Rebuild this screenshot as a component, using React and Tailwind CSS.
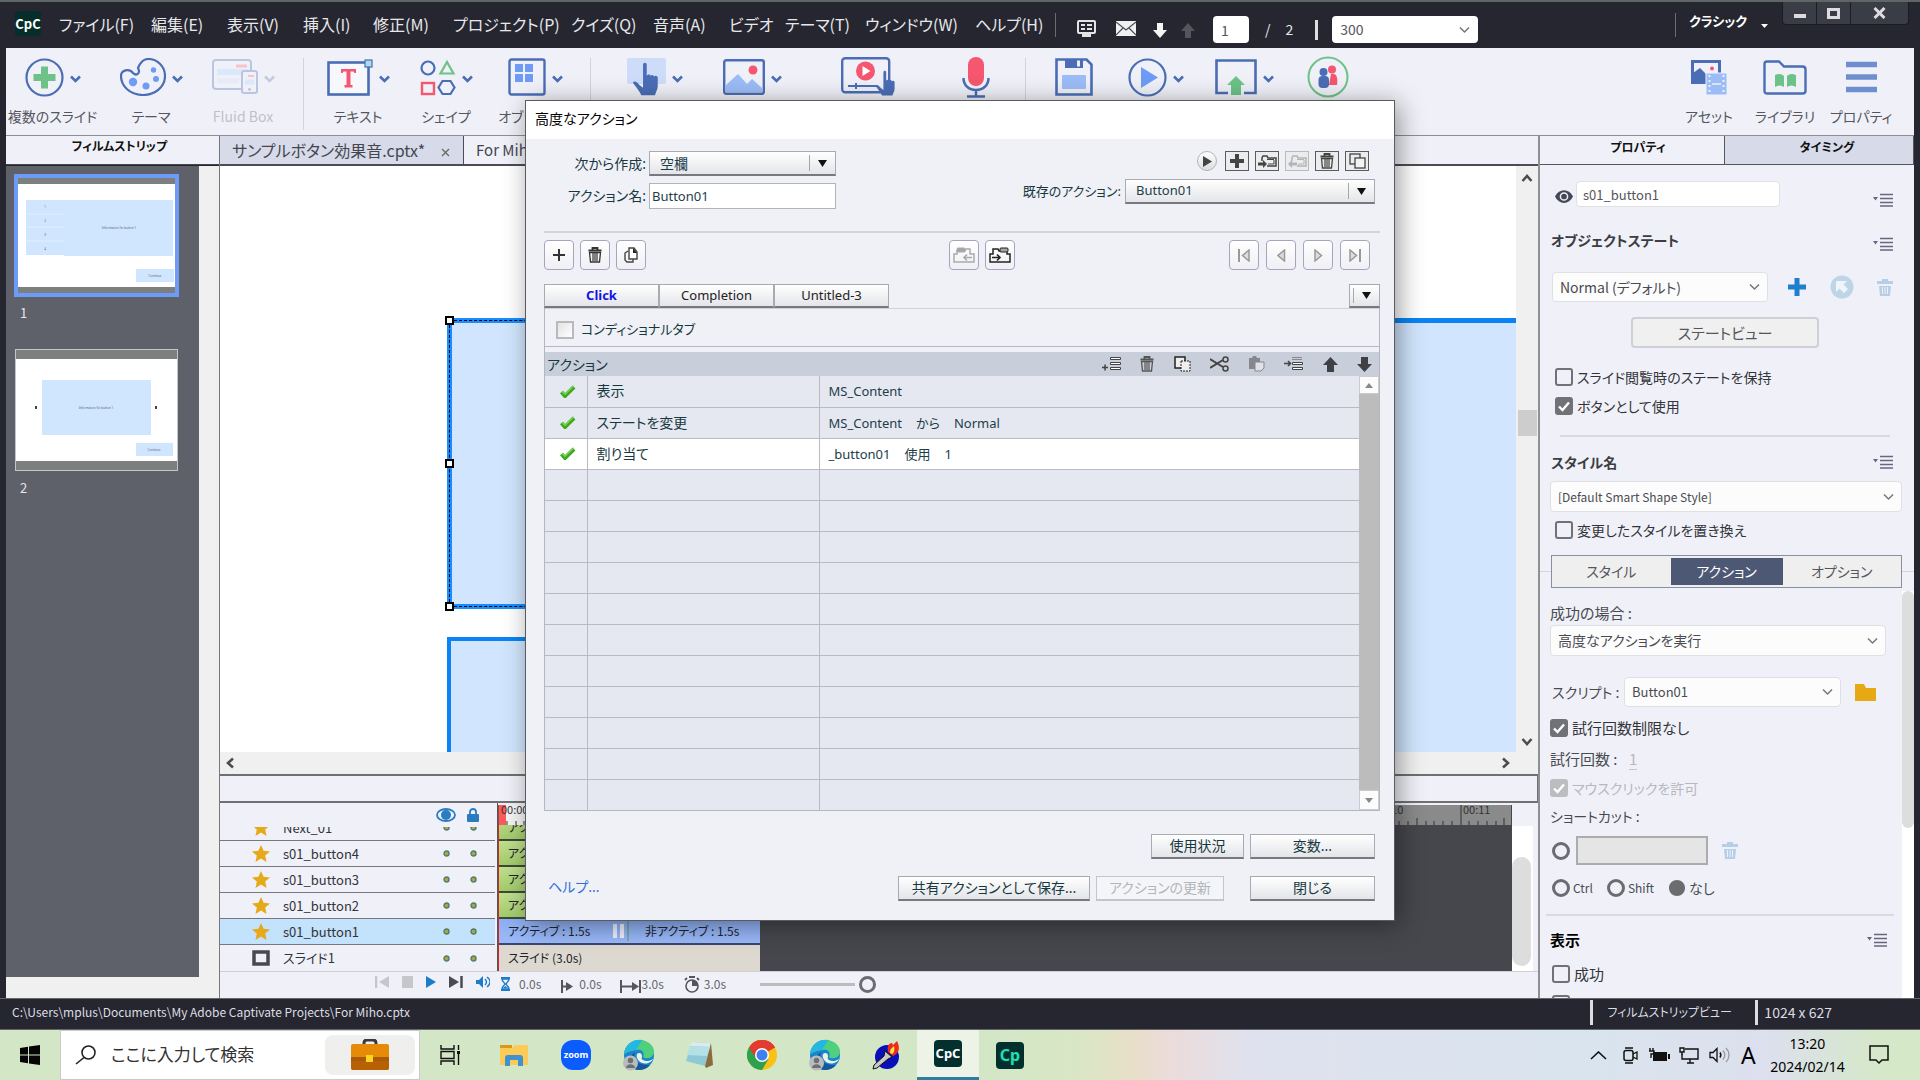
import React from "react";

const BLUE = "#4a6db5";

function Svg({ w, h, vb, children, className = "" }) {
  return (
    <svg width={w} height={h} viewBox={vb || `0 0 ${w} ${h}`} fill="none" className={`shrink-0 ${className}`} aria-hidden="true">
      {children}
    </svg>
  );
}

const MENUS = [
  ["ファイル(F)", "w-[92px]"], ["編集(E)", "w-[76px]"], ["表示(V)", "w-[76px]"], ["挿入(I)", "w-[70px]"],
  ["修正(M)", "w-[80px]"], ["プロジェクト(P)", "w-[118px]"], ["クイズ(Q)", "w-[82px]"], ["音声(A)", "w-[76px]"],
  ["ビデオ", "w-[56px]"], ["テーマ(T)", "w-[80px]"], ["ウィンドウ(W)", "w-[110px]"], ["ヘルプ(H)", "w-[76px]"],
];

/* ---------- shared form controls ---------- */

function Chevron() {
  return (
    <Svg w={11} h={7} className="pointer-events-none absolute top-1/2 right-2 -translate-y-1/2">
      <path d="M1 1l4.500 4.500L10 1" stroke="#777" strokeWidth="1.500" />
    </Svg>
  );
}

function PanelSelect({ label, value, className = "", text = "text-[14px]" }) {
  return (
    <span className={`relative inline-flex ${className}`}>
      <select aria-label={label} className={`h-full w-full appearance-none rounded-sm border border-[#dfe0e4] bg-[#fcfcfc] pr-6 pl-[7px] text-[#4a4b50] ${text}`}>
        <option>{value}</option>
      </select>
      <Chevron />
    </span>
  );
}

function Check({ label, name, checked = false, disabled = false, text = "text-[14px]", className = "" }) {
  return (
    <label className={`flex shrink-0 items-center gap-1 leading-[18px] ${text} ${disabled ? "text-[#b7b8bd]" : "text-[#333439]"} ${className}`}>
      <span className="relative flex size-[18px] shrink-0">
        <input
          type="checkbox"
          aria-label={name}
          defaultChecked={checked}
          disabled={disabled}
          className="peer size-[18px] appearance-none rounded-[3px] border-2 border-[#717277] checked:bg-[#717277] disabled:border-[#bcbdc0] disabled:bg-[#bcbdc0]"
        />
        <Svg w={18} h={18} className="pointer-events-none absolute inset-0 hidden peer-checked:block">
          <path d="M4 9.500l3.500 3.500L14 5.500" stroke="#fff" strokeWidth="2.400" />
        </Svg>
      </span>
      {label}
    </label>
  );
}

function Radio({ label, checked = false, text = "text-[12px]" }) {
  return (
    <label className={`flex items-center gap-[3px] text-[#4a4b50] ${text}`}>
      <input
        type="radio"
        name="shortcut"
        defaultChecked={checked}
        aria-label={label || "ショートカットキー"}
        className="size-[18px] appearance-none rounded-full border-[3px] border-[#6b6c70] checked:scale-90 checked:bg-[#6b6c70]"
      />
      {label}
    </label>
  );
}

function MenuLines({ className = "" }) {
  return (
    <button aria-label="パネルメニュー" className={className}>
      <Svg w={20} h={14}>
        <path d="M0 4h5L2.500 7.500z" fill="#6a6480" />
        <path d="M7 1.500h13M7 5.500h13M7 9.500h13M7 13h13" stroke="#6a6480" strokeWidth="1.400" />
      </Svg>
    </button>
  );
}

function PaleTrash() {
  return (
    <Svg w={16} h={17}>
      <path d="M5 0h6v2h5v3H0V2h5z" fill="#b5d0e6" />
      <path d="M2 7h12l-1 10H3z" fill="#b5d0e6" />
      <path d="M5.500 8v7M8 8v7M10.500 8v7" stroke="#f0f1f8" />
    </Svg>
  );
}

/* ---------- title bar ---------- */

function TitleBar() {
  return (
    <header className="flex h-12 shrink-0 border-t-2 border-[#5f6668] bg-[#25262f] pl-[15px] text-[#e8e8ec]">
      <div className="mt-[9px] flex h-[25px] w-[26px] items-center justify-center rounded bg-[#052e2b] text-[13px] font-bold text-white">CpC</div>
      <nav className="ml-[18px] flex h-[44px] w-[982px] items-center">
        {MENUS.map(([m, w]) => (
          <button key={m} className={`shrink-0 text-left text-[16px] whitespace-nowrap ${w}`}>{m}</button>
        ))}
      </nav>
      <div className="mt-[11px] ml-[14px] h-6 w-px bg-[#6b6c72]" />
      <div className="ml-[21px] flex h-[52px] items-center">
        <button aria-label="プレビュー">
          <Svg w={19} h={17}>
            <rect x="1" y="1" width="17" height="12" rx="1" stroke="#e4e4e6" strokeWidth="2" />
            <path d="M4 5h4M10 5h5M4 9h4M10 9h5" stroke="#e4e4e6" strokeWidth="2" />
            <path d="M5 14h9v3H5z" fill="#e4e4e6" />
          </Svg>
        </button>
        <button aria-label="メール" className="ml-5">
          <Svg w={20} h={15}>
            <rect width="20" height="15" fill="#f0f0f2" />
            <path d="M0 1l10 8 10-8M0 14l7-7M20 14l-7-7" stroke="#4b4c52" strokeWidth="1.200" />
          </Svg>
        </button>
        <button aria-label="次のスライド" className="ml-[17px] mt-1">
          <Svg w={14} h={15}><path d="M4 0h6v7h4l-7 8-7-8h4z" fill="#f4f4f5" /></Svg>
        </button>
        <button aria-label="前のスライド" className="ml-[14px] mt-1">
          <Svg w={14} h={15}><path d="M4 15h6V8h4L7 0 0 8h4z" fill="#55565d" /></Svg>
        </button>
      </div>
      <div className="mt-[14px] ml-[18px] flex h-[27px] items-center text-[14px]">
        <input aria-label="スライド番号" defaultValue="1" className="h-[27px] w-[36px] rounded-sm bg-white pl-2 text-[14px] text-[#55565b]" />
        <span className="ml-4">/</span>
        <span className="ml-[15px]">2</span>
        <span className="ml-[22px] h-5 w-[3px] bg-[#dedee0]" />
        <span className="relative ml-[14px] inline-flex">
          <select aria-label="ズーム" className="h-[27px] w-[146px] appearance-none rounded-sm bg-white pl-2 text-[14px] text-[#55565b]">
            <option>300</option>
          </select>
          <Chevron />
        </span>
      </div>
      <div className="mt-[11px] ml-auto h-6 w-px bg-[#6b6c72]" />
      <button className="ml-[13px] flex h-[38px] items-center gap-[14px] text-[13px] font-bold text-white">
        クラシック
        <Svg w={7} h={4} className="mt-[10px]"><path d="M0 0h7L3.500 4z" fill="#fff" /></Svg>
      </button>
      <div className="mr-[11px] ml-[14px] flex h-[23px] rounded-b-sm border border-t-0 border-[#1a1b21] bg-[#3a3c46]">
        <button aria-label="最小化" className="flex w-[34px] items-center justify-center border-r border-[#1c1d23]">
          <Svg w={13} h={12}><path d="M1 9h12" stroke="#dcdce0" strokeWidth="4" /></Svg>
        </button>
        <button aria-label="最大化" className="flex w-[34px] items-center justify-center border-r border-[#1c1d23]">
          <Svg w={13} h={11}><rect x="1.500" y="1.500" width="10" height="8" stroke="#dcdce0" strokeWidth="3" /></Svg>
        </button>
        <button aria-label="ウィンドウを閉じる" className="flex w-[57px] items-center justify-center">
          <Svg w={13} h={12}><path d="M1.500 1l10 10M11.500 1l-10 10" stroke="#dcdce0" strokeWidth="3" /></Svg>
        </button>
      </div>
    </header>
  );
}

/* ---------- main toolbar ---------- */

const HAND = "M12 2c0-3 4-3 4 0v12c1-2 4-2 4 0 1-2 4-1 4 1 1-2 4-1 4 1v9c0 4-2 6-3 10H10c-1-4-8-11-9-14 2-2 5 0 7 3l4 3z";

const ICONS = {
  slide: (
    <Svg w={39} h={39}>
      <circle cx="19.500" cy="19.500" r="18" stroke={BLUE} strokeWidth="2.200" />
      <path d="M16 8.500h7v7.500h7.500v7H23v7.500h-7V23H8.500v-7H16z" fill="#6cc287" />
    </Svg>
  ),
  theme: (
    <Svg w={46} h={38}>
      <path d="M18 10C21 3 24 1 28 1c9 0 17 7 17 17 0 11-10 19-22 19C10 37 1 28 1 18c0-6 8-8 12-3 3 3 8 1 5-5z" stroke={BLUE} strokeWidth="2.200" />
      <circle cx="13" cy="24" r="4.200" fill="#6d9bf5" />
      <circle cx="26" cy="28" r="3.500" fill="#6d9bf5" />
      <circle cx="36" cy="21" r="3" fill="#6d9bf5" />
      <circle cx="33.500" cy="12" r="2.700" fill="#6d9bf5" />
    </Svg>
  ),
  fluid: (
    <Svg w={46} h={36}>
      <rect x="1" y="1" width="38" height="29" rx="3" stroke="#bac6df" strokeWidth="2" />
      <path d="M24 7h11" stroke="#f6c3cd" strokeWidth="3" />
      <path d="M5 13h32" stroke="#dbe7fb" strokeWidth="6" />
      <path d="M5 22h22" stroke="#e6ebf5" strokeWidth="5" />
      <rect x="30" y="12" width="15" height="22" rx="2" fill="#f0f1f8" stroke="#bac6df" strokeWidth="2" />
      <path d="M36 17h6" stroke="#f6c3cd" strokeWidth="2" />
      <path d="M33 23h9" stroke="#dbe7fb" strokeWidth="5" />
      <circle cx="37.500" cy="30.500" r="1.400" fill="#bac6df" />
    </Svg>
  ),
  text: (
    <Svg w={46} h={37}>
      <rect x="1.500" y="3.500" width="40" height="32" fill="#f7f8fb" stroke={BLUE} strokeWidth="2.600" />
      <rect x="38" y="1" width="7" height="7" fill="#a9dcec" stroke={BLUE} strokeWidth="1.200" />
      <path d="M14 10h15v4h-1.500l-1-1.500h-3v13.500h2v2.500h-8V26h2V12.500h-3l-1 1.500H14z" fill="#f4576f" />
    </Svg>
  ),
  shape: (
    <Svg w={36} h={37}>
      <circle cx="8" cy="9" r="6.500" stroke={BLUE} strokeWidth="2.200" />
      <path d="M27 3l6.500 11.500h-13z" stroke="#6cc287" strokeWidth="2.200" />
      <rect x="2" y="24" width="12" height="11" stroke="#f4576f" strokeWidth="2.400" />
      <path d="M22.500 22h8l4 6.500-4 6.500h-8l-4-6.500z" stroke={BLUE} strokeWidth="2.200" />
    </Svg>
  ),
  object: (
    <Svg w={38} h={38}>
      <rect x="1.500" y="1.500" width="35" height="35" rx="2" stroke={BLUE} strokeWidth="2.400" />
      <path d="M7 6h8v8H7zM17 6h8v8h-8zM7 16h8v8H7zM17 16h8v8h-8z" fill="#6d9bf5" />
    </Svg>
  ),
  hand: (
    <Svg w={39} h={38}>
      <rect width="39" height="26" rx="2" fill="#cddcf9" />
      <g transform="translate(5 5) scale(.92)"><path d={HAND} fill={BLUE} /></g>
    </Svg>
  ),
  image: (
    <Svg w={42} h={36}>
      <rect x="1.200" y="1.200" width="39.600" height="33.600" rx="2" stroke={BLUE} strokeWidth="2.400" />
      <path d="M3 33v-7l12-11 9 10 5-5 10 9v4z" fill="#9cbcf7" />
      <circle cx="30" cy="11" r="4.500" fill="#f4576f" />
    </Svg>
  ),
  video: (
    <Svg w={54} h={40}>
      <rect x="1.200" y="1.200" width="47" height="34" rx="3" stroke={BLUE} strokeWidth="2.400" />
      <circle cx="24.500" cy="14" r="9.500" fill="#f4576f" />
      <path d="M21.500 9l8 5-8 5z" fill="#fff" />
      <path d="M7 29h30M15 26v6" stroke={BLUE} strokeWidth="2" />
      <g transform="translate(34 14) scale(.7)"><path d={HAND} fill={BLUE} /></g>
    </Svg>
  ),
  mic: (
    <Svg w={28} h={41}>
      <rect x="6" y="0" width="16" height="29" rx="8" fill="#f4576f" />
      <path d="M1.500 21c0 7 5 12 12.500 12s12.500-5 12.500-12M14 33v6M5 39.500h18" stroke={BLUE} strokeWidth="2.500" />
    </Svg>
  ),
  save: (
    <Svg w={38} h={38}>
      <path d="M1.500 1.500h30l5 5v30h-35z" stroke={BLUE} strokeWidth="2.600" />
      <path d="M10 1h18v9H10z" fill={BLUE} />
      <path d="M22 2.500h3v6h-3z" fill="#f0f1f8" />
      <rect x="7" y="17" width="24" height="14" rx="1" fill="#9cbcf7" />
    </Svg>
  ),
  play: (
    <Svg w={39} h={39}>
      <circle cx="19.500" cy="19.500" r="18" stroke={BLUE} strokeWidth="2.200" />
      <path d="M13 9l17 10.500L13 30z" fill="#6d9bf5" />
    </Svg>
  ),
  publish: (
    <Svg w={42} h={36}>
      <path d="M13 34H1.500V1.500h39V34H29" stroke={BLUE} strokeWidth="2.600" />
      <path d="M21 17l9 9h-4v10H16V26h-4z" fill="#6cc287" />
    </Svg>
  ),
  people: (
    <Svg w={42} h={42}>
      <circle cx="21" cy="21" r="19.500" stroke="#6cc287" strokeWidth="2" />
      <circle cx="25" cy="13.500" r="4" fill="#f4576f" />
      <path d="M24 18c6-1 7 4 6 11h-8z" fill="#f4576f" />
      <circle cx="16.500" cy="16" r="4" fill={BLUE} />
      <rect x="11.500" y="20" width="10.500" height="12" rx="4" fill={BLUE} />
    </Svg>
  ),
  asset: (
    <Svg w={36} h={35}>
      <rect x="1.500" y="1.500" width="27" height="21" stroke={BLUE} strokeWidth="3" />
      <path d="M2 22V13l7-5 6 6v8z" fill={BLUE} />
      <circle cx="21" cy="8.500" r="2" fill="#f4576f" />
      <rect x="15" y="13" width="21" height="22" fill="#9cbcf7" stroke="#f0f1f8" />
      <path d="M18.500 15v18M32.500 15v18" stroke="#f0f1f8" strokeWidth="2" strokeDasharray="2 3" />
      <path d="M21 24h9" stroke="#f0f1f8" strokeWidth="1.500" />
    </Svg>
  ),
  library: (
    <Svg w={44} h={35}>
      <path d="M4 1.500h12l5 5h18.500c2 0 3 1 3 3V31c0 2-1 2.500-3 2.500h-35c-2 0-3-.5-3-2.500V4c0-1.500 1-2.500 2.500-2.500z" stroke={BLUE} strokeWidth="2.400" />
      <path d="M12 15c4-2 7-1 9 1v11c-3-2-6-2-9 0zM33 15c-4-2-7-1-9 1v11c3-2 6-2 9 0z" fill="#6cc287" />
    </Svg>
  ),
  property: (
    <Svg w={31} h={32}><path d="M0 3.500h31M0 16h31M0 28.500h31" stroke="#6d8fce" strokeWidth="5.500" /></Svg>
  ),
};

function Tool({ icon, label, caret = true, dim = false, w }) {
  return (
    <button className={`flex shrink-0 flex-col items-center ${w}`}>
      <span className="flex h-[42px] items-center gap-[6px]">
        {ICONS[icon]}
        {caret && (
          <Svg w={11} h={8} className="mt-1"><path d="M1 1.500l4.500 4.500L10 1.500" stroke={dim ? "#c2cbe0" : BLUE} strokeWidth="2.600" /></Svg>
        )}
      </span>
      {label && <span className={`mt-[7px] text-[14px] leading-[22px] whitespace-nowrap ${dim ? "text-[#bfc0c8]" : "text-[#55565d]"}`}>{label}</span>}
    </button>
  );
}

const Rule = () => <div className="mt-[2px] h-[72px] w-px shrink-0 bg-[#d4d5da]" />;

function Toolbar() {
  return (
    <div className="flex h-[88px] shrink-0 items-start overflow-hidden border-b border-[#8d8e93] bg-[#f0f1f8] pt-2">
      <Tool icon="slide" label="複数のスライド" w="w-[93px]" />
      <Tool icon="theme" label="テーマ" w="w-[104px]" />
      <Tool icon="fluid" label="Fluid Box" dim w="w-[80px]" />
      <div className="w-5" />
      <Rule />
      <Tool icon="text" label="テキスト" w="w-[108px]" />
      <Tool icon="shape" label="シェイプ" w="w-[68px]" />
      <Tool icon="object" label="オブジェクト" w="w-[110px]" />
      <Rule />
      <Tool icon="hand" w="w-[128px]" />
      <Tool icon="image" w="w-[66px]" />
      <Tool icon="video" caret={false} w="w-[166px]" />
      <Tool icon="mic" caret={false} w="w-[50px]" />
      <div className="w-6" />
      <Rule />
      <Tool icon="save" caret={false} w="w-[96px]" />
      <Tool icon="play" w="w-[68px]" />
      <Tool icon="publish" w="w-[108px]" />
      <Tool icon="people" caret={false} w="w-[60px]" />
      <div className="mr-[15px] ml-auto flex">
        <Tool icon="asset" label="アセット" caret={false} w="w-[76px]" />
        <Tool icon="library" label="ライブラリ" caret={false} w="w-[76px]" />
        <Tool icon="property" label="プロパティ" caret={false} w="w-[76px]" />
      </div>
    </div>
  );
}

/* ---------- filmstrip ---------- */

function Filmstrip() {
  return (
    <aside className="flex w-[214px] shrink-0 flex-col border-r border-[#77787c]">
      <h2 className="h-[29px] border-b border-[#45464a] bg-[#f0f1f8] pl-[14px] text-center text-[12px] leading-[20px] font-bold text-[#111]">フィルムストリップ</h2>
      <div className="flex min-h-0 flex-1 pt-px">
        <div className="flex-1 bg-[#5e616a] pt-2 pl-2 text-[13px] leading-4 text-[#e6e6e8]">
          <button className="block border-4 border-[#6d9bf8]">
            <Svg w={157} h={115}>
              <rect width="157" height="115" fill="#fff" />
              <path d="M0 0h157v6H0zM0 109h157v6H0z" fill="#7d7f7e" />
              <path d="M8 22h38v55H8zM46 22h109v56H46zM118 91h38v13h-38z" fill="#d0e5fe" />
              <path d="M8 36h38M8 49h38M8 63h38" stroke="#e2effe" strokeWidth="1" />
              <g fill="#5a6672" fontSize="3" textAnchor="middle" fontFamily="Noto Sans">
                <text x="27" y="30">1</text><text x="27" y="44">2</text><text x="27" y="58">3</text><text x="27" y="72">4</text>
                <text x="101" y="51">Information for button 1</text>
                <text x="137" y="99">Continue</text>
              </g>
            </Svg>
          </button>
          <p className="mt-2 ml-[6px]">1</p>
          <button className="mt-7 ml-px block border border-[#c4c5c8]">
            <Svg w={161} h={120}>
              <rect width="161" height="120" fill="#fff" />
              <path d="M0 0h161v9H0zM0 111h161v9H0z" fill="#7d7f7e" />
              <path d="M26 30h109v55H26zM120 93h37v13h-37z" fill="#d0e5fe" />
              <path d="M19 56h2v3h-2zM139 56h2v3h-2z" fill="#444" />
              <g fill="#5a6672" fontSize="3" textAnchor="middle" fontFamily="Noto Sans">
                <text x="80" y="59">Information for button 1</text>
                <text x="138" y="101">Continue</text>
              </g>
            </Svg>
          </button>
          <p className="mt-[9px] ml-[6px]">2</p>
        </div>
        <div className="w-5 bg-[#f0f0f0]" />
      </div>
      <div className="h-[21px] bg-[#f0f0f0]" />
    </aside>
  );
}

/* ---------- stage ---------- */

function Arrow({ d, label, className = "" }) {
  return (
    <button aria-label={label} className={className}>
      <Svg w={12} h={12}><path d={d} stroke="#4d4d50" strokeWidth="2.600" /></Svg>
    </button>
  );
}

function Stage() {
  return (
    <>
      <div className="flex h-[30px] shrink-0 border-b-2 border-[#4c4d52] bg-[#f0f1f8] text-[#444550]">
        <div className="flex w-[244px] items-center justify-between border-r border-[#4c4d52] bg-[#d7dae8] pr-[13px] pl-3">
          <button className="text-[16px] leading-6 whitespace-nowrap">サンプルボタン効果音.cptx*</button>
          <button aria-label="タブを閉じる"><Svg w={9} h={9} className="mt-1"><path d="M1 1l7 7M8 1L1 8" stroke="#666" strokeWidth="1.300" /></Svg></button>
        </div>
        <button className="pl-3 text-[15px] leading-6">For Miho.cptx</button>
      </div>
      <div className="flex min-h-0 flex-1">
        <div className="relative flex-1 overflow-hidden bg-white">
          <div className="absolute top-[152px] -right-3 left-[227px] h-[800px] border-[5px] border-b-0 border-[#0a84f5] bg-[#d1e6fe]" />
          <div className="absolute top-[152px] left-[227px] h-[291px] w-[500px] border-[5px] border-[#1a8cff] bg-[#d1e6fe]" />
          <div className="absolute top-[154px] left-[229px] h-[287px] w-[500px] border border-dashed border-black" />
          <div className="absolute top-[443px] left-[220px] h-[28px] w-[500px] bg-white" />
          <div className="absolute top-[471px] left-[227px] h-[400px] w-[500px] border-[4px] border-[#0a84f5] bg-[#d1e6fe]" />
          <div className="absolute top-[150px] left-[225px] size-[9px] border-2 border-black bg-white" />
          <div className="absolute top-[293px] left-[225px] size-[9px] border-2 border-black bg-white" />
          <div className="absolute top-[436px] left-[225px] size-[9px] border-2 border-black bg-white" />
        </div>
        <div className="flex w-[22px] flex-col items-center bg-[#f0f0f0] pt-[6px] pb-1">
          <Arrow label="上へスクロール" d="M1.500 9L6 4l4.500 5" />
          <div className="mt-[226px] h-[26px] w-[19px] bg-[#cdcdcd]" />
          <Arrow label="下へスクロール" d="M1.500 3L6 8l4.500-5" className="mt-auto" />
        </div>
      </div>
      <div className="flex h-[22px] shrink-0 items-center justify-between bg-[#f0f0f0] pr-[26px] pl-1">
        <Arrow label="左へスクロール" d="M9 1.500L4 6l5 4.500" />
        <Arrow label="右へスクロール" d="M3 1.500L8 6l-5 4.500" />
      </div>
      <div className="h-[29px] shrink-0 border-y-2 border-r border-[#6f7074] bg-[#f0f1f8]" />
    </>
  );
}

/* ---------- timeline ---------- */

const TRACKS = ["Next_01", "s01_button4", "s01_button3", "s01_button2", "s01_button1", "スライド1"];

function Dot() {
  return <Svg w={7} h={7}><circle cx="3.500" cy="3.500" r="2.500" fill="#b5a24a" stroke="#4c8069" strokeWidth="1.400" /></Svg>;
}

function Ruler() {
  const ticks = [];
  for (let i = 0; i < 116; i++) {
    const h = i % 10 === 0 ? 20 : i % 5 === 0 ? 7 : 4;
    ticks.push(<path key={i} d={`M${Math.round(i * 8.75)} 20v-${h}`} stroke="#333" />);
  }
  return (
    <Svg w={1013} h={20} className="max-w-full">
      <rect width="1013" height="20" fill="#8a8a8a" />
      <rect width="262" height="20" fill="#f4f4f5" />
      <rect width="8" height="20" fill="#fb5b5b" />
      {ticks}
      <g fill="#333" fontSize="11" fontFamily="Noto Sans CJK JP">
        <text x="3" y="9">00:00</text>
        <text x="878" y="9">00:10</text>
        <text x="965" y="9">00:11</text>
      </g>
    </Svg>
  );
}

function Timeline() {
  return (
    <section className="flex h-[195px] shrink-0 flex-col bg-[#f0f1f8] text-[#333439]">
      <div className="flex h-[168px]">
        <div className="flex w-[278px] shrink-0 flex-col border-r border-[#555]">
          <div className="flex h-6 items-center justify-end gap-[11px] pr-[18px]">
            <Svg w={20} h={14}>
              <ellipse cx="10" cy="7" rx="9" ry="6" stroke="#2a7cc0" strokeWidth="1.800" />
              <circle cx="10" cy="7" r="5" fill="#2a7cc0" />
            </Svg>
            <Svg w={12} h={14}><path d="M3 6V4c0-4 6-4 6 0v2" stroke="#2a7cc0" strokeWidth="1.800" /><rect y="6" width="12" height="8" rx="1" fill="#2a7cc0" /></Svg>
          </div>
          <ul className="flex min-h-0 flex-1 flex-col justify-end overflow-hidden">
            {TRACKS.map((t) => (
              <li key={t} className={`mr-[2px] flex h-[26px] shrink-0 items-center border-b border-[#77787e] pr-[18px] pl-8 last:border-b-0 ${t === "s01_button1" ? "bg-[#c3e2fb]" : ""}`}>
                {t === "スライド1" ? (
                  <Svg w={18} h={16}><rect x="2" y="2" width="14" height="12" stroke="#48494d" strokeWidth="3.500" /></Svg>
                ) : (
                  <Svg w={18} h={17}><path d="M9 0l2.600 5.800 6.400.6-4.800 4.200L14.500 17 9 13.600 3.500 17l1.300-6.400L0 6.400l6.400-.6z" fill="#e6a91a" /></Svg>
                )}
                <span className="ml-[13px] flex-1 text-[13px] leading-4">{t}</span>
                <Dot />
                <span className="w-5" />
                <Dot />
              </li>
            ))}
          </ul>
        </div>
        <div className="relative mt-[2px] flex min-w-0 flex-1 flex-col bg-[#46474c] text-[12px]">
          <Ruler />
          <ul className="flex min-h-0 w-[262px] flex-1 flex-col justify-end overflow-hidden text-[#22232a]">
            {TRACKS.slice(0, 4).map((t) => (
              <li key={t} className="flex h-[26px] shrink-0 items-center border-b-2 border-[#3d4a38] bg-linear-to-b from-[#bfe08f] to-[#a3cb6b] pl-[10px]">アクティブ : 1.5s</li>
            ))}
            <li className="flex h-[26px] shrink-0 items-center border-b-2 border-[#3b486e] bg-linear-to-b from-[#8caef3] to-[#9bbaf9] pl-[10px] whitespace-nowrap">
              <span className="w-[105px]">アクティブ : 1.5s</span>
              <Svg w={16} h={20}><path d="M2 3v14M9 3v14" stroke="#eef" strokeWidth="4" /><path d="M15 0v20" stroke="#5a9a5a" /></Svg>
              <span className="ml-4">非アクティブ : 1.5s</span>
            </li>
            <li className="flex h-[26px] shrink-0 items-center bg-[#ddd9d1] pl-[10px]">スライド (3.0s)</li>
          </ul>
          <div className="absolute top-5 bottom-0 left-0 w-px bg-[#d22]" />
        </div>
        <div className="w-[26px] shrink-0 pt-[23px]">
          <div className="h-full w-[21px] bg-white pt-[31px]">
            <div className="h-[109px] w-[19px] rounded-full bg-[#dcdddc]" />
          </div>
        </div>
      </div>
      <div className="flex h-[27px] items-start border-t border-[#d0d0d4] pt-[3px] text-[12px] text-[#66676b]">
        <div className="flex h-[13px] w-[278px] items-center justify-end gap-[13px] pr-2">
          <button aria-label="先頭へ"><Svg w={14} h={12}><path d="M1 0v12" stroke="#c6c7cb" strokeWidth="2.500" /><path d="M14 0v12L4 6z" fill="#c6c7cb" /></Svg></button>
          <button aria-label="停止"><Svg w={11} h={12}><path d="M0 0h11v12H0z" fill="#c6c7cb" /></Svg></button>
          <button aria-label="再生"><Svg w={10} h={12}><path d="M0 0l10 6-10 6z" fill="#1d7cc8" /></Svg></button>
          <button aria-label="末尾へ"><Svg w={14} h={12}><path d="M0 0l10 6-10 6z" fill="#4a4b4f" /><path d="M12.500 0v12" stroke="#4a4b4f" strokeWidth="2.500" /></Svg></button>
          <button aria-label="音声"><Svg w={14} h={12}><path d="M0 4h3l4-4v12L3 8H0z" fill="#1d7cc8" /><path d="M9 3c2 2 2 4 0 6M11 1c4 3 4 7 0 10" stroke="#1d7cc8" strokeWidth="1.400" /></Svg></button>
        </div>
        <div className="flex items-center">
          <Svg w={11} h={14} className="ml-[2px]"><path d="M1 1h9M1 13h9" stroke="#1d7cc8" strokeWidth="2" /><path d="M2 2c0 3 3 4 3 5s-3 2-3 5h7c0-3-3-4-3-5s3-2 3-5z" stroke="#1d7cc8" strokeWidth="1.400" /><path d="M3 11h5L5.500 9z" fill="#1d7cc8" /></Svg>
          <span className="ml-2">0.0s</span>
          <Svg w={12} h={13} className="mt-1 ml-5"><path d="M1 0v13M1 6.500h6" stroke="#55565a" strokeWidth="2" /><path d="M5 2l7 4.500L5 11z" fill="#55565a" /></Svg>
          <span className="ml-[6px]">0.0s</span>
          <Svg w={21} h={13} className="mt-1 ml-[18px]"><path d="M1 0v13M20 0v13M1 6.500h14" stroke="#55565a" strokeWidth="2" /><path d="M12 2l7 4.500-7 4.500z" fill="#55565a" /></Svg>
          <span className="ml-px">3.0s</span>
          <Svg w={16} h={17} className="ml-5"><circle cx="8" cy="10" r="6" stroke="#55565a" strokeWidth="1.600" /><path d="M8 10V4a6 6 0 0 1 6 6z" fill="#55565a" /><path d="M5 1h6M1 4l2-2M15 4l-2-2" stroke="#55565a" strokeWidth="1.800" /></Svg>
          <span className="ml-1">3.0s</span>
          <input
            type="range"
            aria-label="タイムラインのズーム"
            defaultValue="100"
            className="ml-[34px] h-[18px] w-[116px] appearance-none bg-linear-to-r from-[#bbbcbe] to-[#bbbcbe] bg-[length:95px_3px] bg-left bg-no-repeat [&::-webkit-slider-thumb]:size-[17px] [&::-webkit-slider-thumb]:appearance-none [&::-webkit-slider-thumb]:rounded-full [&::-webkit-slider-thumb]:border-[3px] [&::-webkit-slider-thumb]:border-[#6b6c70] [&::-webkit-slider-thumb]:bg-[#f0f1f8]"
          />
        </div>
      </div>
    </section>
  );
}

/* ---------- property inspector ---------- */

function Properties() {
  const h3 = "text-[14px] leading-5 font-bold text-[#3c3d43]";
  const txt = "leading-5 text-[#4a4b50]";
  return (
    <aside className="flex w-[376px] shrink-0 flex-col overflow-hidden border-l-2 border-[#8f9094] bg-[#f0f1f8]">
      <div className="flex h-[29px] shrink-0 border-b border-[#55565b] text-[12px] leading-[20px] font-bold text-[#111]">
        <button className="flex-1 pb-[7px] pl-3">プロパティ</button>
        <button className="flex-1 border-x border-[#55565b] bg-[#d7dae8] pb-[7px] pl-4">タイミング</button>
      </div>
      <div className="flex h-[42px] shrink-0 items-end pr-[21px] pl-[15px]">
        <Svg w={18} h={13} className="mb-1"><path d="M0 6.500C4-2 14-2 18 6.500 14 15 4 15 0 6.500z" fill="#454754" /><circle cx="9" cy="6.500" r="3.600" stroke="#f0f1f8" strokeWidth="1.500" /></Svg>
        <input aria-label="オブジェクト名" defaultValue="s01_button1" className="ml-[3px] h-[26px] w-[204px] rounded-sm border border-[#dfe0e4] bg-white px-[6px] text-[13px] text-[#55565b]" />
        <MenuLines className="ml-auto" />
      </div>
      <div className="mt-[23px] flex shrink-0 items-start justify-between pr-[21px] pl-[11px]">
        <h3 className={h3}>オブジェクトステート</h3>
        <MenuLines className="mt-[7px]" />
      </div>
      <div className="mt-[21px] flex shrink-0 items-center pr-[21px] pl-3">
        <PanelSelect label="オブジェクトステート" value="Normal (デフォルト)" className="h-[30px] w-[216px]" />
        <button aria-label="ステートを追加" className="ml-5"><Svg w={18} h={18}><path d="M9 0v18M0 9h18" stroke="#1f7fca" strokeWidth="5" /></Svg></button>
        <button aria-label="ステートをリセット" className="ml-6"><Svg w={24} h={24}><circle cx="12" cy="12" r="11.500" fill="#bdd5e6" /><path d="M6 6h11l-3.500 3.500L18 14l-4 4-4.500-4.500L6 17z" fill="#f0f5fa" /></Svg></button>
        <button aria-label="ステートを削除" className="ml-auto"><PaleTrash /></button>
      </div>
      <button className="mt-[15px] ml-[91px] h-[31px] w-[188px] shrink-0 rounded-sm border-2 border-[#cfd0d5] bg-[#f0f0f1] text-[15px] leading-5 text-[#55565b]">ステートビュー</button>
      <Check label="スライド閲覧時のステートを保持" className="mt-5 ml-[15px]" />
      <Check label="ボタンとして使用" checked className="mt-[11px] ml-[15px]" />
      <hr className="mt-5 mr-6 ml-5 border-t-2 border-[#d9dadd]" />
      <div className="mt-[15px] flex shrink-0 items-center justify-between pr-[21px] pl-[11px]">
        <h3 className={h3}>スタイル名</h3>
        <MenuLines />
      </div>
      <PanelSelect label="スタイル名" value="[Default Smart Shape Style]" text="text-[12px]" className="mt-[9px] mr-3 ml-[10px] h-[31px] shrink-0" />
      <Check label="変更したスタイルを置き換え" className="mt-[9px] ml-[15px]" />
      <div className="mt-4 flex shrink-0 items-center">
        <span className="h-px w-[11px] bg-[#d4d5da]" />
        <div className="flex h-[33px] flex-1 border border-[#8a8ea3] bg-[#efeff0] text-[14px] text-[#55565b]" role="tablist">
          <button role="tab" className="flex-1">スタイル</button>
          <button role="tab" aria-selected="true" className="my-[2px] w-[112px] bg-[#4d5874] text-white">アクション</button>
          <button role="tab" className="flex-1">オプション</button>
        </div>
        <span className="h-px w-3 bg-[#d4d5da]" />
      </div>
      <div className="flex min-h-0 flex-1 overflow-hidden pt-[3px]">
        <div className="flex min-w-0 flex-1 flex-col pl-[10px]">
          <p className={`mt-3 text-[15px] ${txt}`}>成功の場合 :</p>
          <PanelSelect label="成功の場合" value="高度なアクションを実行" className="mt-[2px] mr-[16px] h-[31px] shrink-0" />
          <div className="mt-[21px] flex shrink-0 items-center">
            <span className={`w-[74px] pl-[2px] text-[14px] ${txt}`}>スクリプト :</span>
            <PanelSelect label="スクリプト" value="Button01" text="text-[13px]" className="h-[30px] w-[217px]" />
            <button aria-label="参照" className="ml-[14px]"><Svg w={21} h={17}><path d="M0 0h9l2 4h10v13H0z" fill="#e6a913" /></Svg></button>
          </div>
          <Check label="試行回数制限なし" checked text="text-[15px]" className="mt-3" />
          <p className={`mt-3 text-[15px] ${txt}`}>試行回数 : <span className="ml-2 border-b border-[#c4c5c8] text-[#b7b8bd]">1</span></p>
          <Check label="マウスクリックを許可" checked disabled className="mt-[10px]" />
          <p className={`mt-[9px] text-[14px] ${txt}`}>ショートカット :</p>
          <div className="mt-[10px] flex shrink-0 items-center pl-[2px]">
            <Radio />
            <input aria-label="ショートカット" disabled className="ml-[6px] h-[29px] w-[132px] border-2 border-[#abacb0] bg-[#e5e5e5]" />
            <span className="ml-[14px]"><PaleTrash /></span>
          </div>
          <div className="mt-[14px] flex h-[18px] shrink-0 items-center gap-[14px] pl-[2px] leading-[18px]">
            <Radio label="Ctrl" />
            <Radio label="Shift" />
            <Radio label="なし" checked text="text-[14px]" />
          </div>
          <hr className="mt-[17px] mr-2 -ml-1 border-t-2 border-[#d9dadd]" />
          <div className="mt-[14px] flex shrink-0 items-center justify-between pr-[15px]">
            <h3 className="text-[15px] leading-5 font-bold text-black">表示</h3>
            <MenuLines />
          </div>
          <Check label="成功" text="text-[15px]" className="mt-[15px] ml-[2px]" />
          <Check name="失敗" className="mt-3 ml-[2px]" />
        </div>
        <div className="w-3 bg-white">
          <div className="h-[237px] rounded-full bg-[#dcdddd]" />
        </div>
      </div>
    </aside>
  );
}

/* ---------- advanced actions dialog ---------- */

const BTN = "border border-[#a9abb3] border-b-[#77797f] border-b-2 bg-linear-to-b from-white to-[#e4e5e9]";

function DialogSelect({ label, value, className = "", text = "text-[13px]" }) {
  return (
    <span className={`relative inline-flex h-[25px] ${className}`}>
      <select id={label} aria-label={label} className={`w-full appearance-none pl-[10px] text-[#1d3d4a] ${text} ${BTN}`}>
        <option>{value}</option>
      </select>
      <span className="pointer-events-none absolute top-1 right-[9px] flex h-4 items-center border-l border-[#a5a6aa] pl-[8px]">
        <Svg w={9} h={7}><path d="M0 0h9L4.500 7z" fill="#111" /></Svg>
      </span>
    </span>
  );
}

const trash = (c) => (
  <Svg w={14} h={16}>
    <path d="M4.500 2.500V1h5v1.500M.5 3.500h13" stroke={c} strokeWidth="1.800" />
    <path d="M1.500 5.500h11l-1 9.500h-9z" stroke={c} strokeWidth="1.300" />
    <path d="M5 6v8M7 6v8M9 6v8" stroke={c} strokeWidth="1.200" />
  </Svg>
);

const folder = (c, left) => (
  <Svg w={19} h={15}>
    <path d="M4 7V4l1-2h4l1 2h8v8H9" stroke={c} strokeWidth="1.500" />
    <path d="M9 5.500h7M10 10h6V6" stroke={c} strokeWidth="1" />
    <path d={left ? "M0 10l4-4v2.500h5v3H4V14z" : "M9 10L5 6v2.500H0v3h5V14z"} fill={c} />
  </Svg>
);

const tabFolder = (c, left) => (
  <Svg w={22} h={16}>
    <path d={left ? "M1 15V7h3V4h8l1-2h4v5h4v8z" : "M1 15V7h3V2h5l1 2h8v3h3v8z"} stroke={c} strokeWidth="1.500" />
    <rect x={left ? 4 : 11} y="1" width="8" height="4" rx="1" fill="#a5a5a8" stroke={c} />
    <path d={left ? "M19 10.500h-8M14 7.500l-3 3 3 3" : "M3 10.500h8M8 7.500l3 3-3 3"} stroke={c} strokeWidth="1.600" />
  </Svg>
);

const copy = (
  <Svg w={17} h={16}>
    <rect x="1" y="1" width="10" height="10" stroke="#444" strokeWidth="1.300" />
    <rect x="6" y="5" width="10" height="10" fill="#f3f3f5" stroke="#444" strokeWidth="1.300" />
  </Svg>
);

const TOP_BUTTONS = [
  ["新規アクション", <Svg w={14} h={14}><path d="M7 0v14M0 7h14" stroke="#444" strokeWidth="4" /></Svg>, false],
  ["アクションを読み込み", folder("#444", false), false],
  ["アクションを書き出し", folder("#b4b4b8", true), true],
  ["アクションを削除", trash("#444"), false],
  ["アクションを複製", copy, false],
];

const ROW_ICONS = [
  ["追加", <Svg w={19} h={16}><path d="M0 11.500h6M3 8.500v6" stroke="#444" strokeWidth="1.500" /><path d="M8.500 1.500h10v2h-10zM8.500 6.500h10v2h-10zM8.500 11.500h10v2h-10z" fill="#fff" stroke="#444" /></Svg>],
  ["削除", trash("#555")],
  ["コピー", <Svg w={17} h={16}><rect x="1" y="1" width="10" height="11" fill="#eee" stroke="#222" strokeWidth="1.500" /><rect x="7" y="5" width="9" height="10" fill="#eee" stroke="#222" strokeDasharray="2 1" /></Svg>],
  ["切り取り", <Svg w={19} h={16}><path d="M0 3l13 8M0 12L13 4" stroke="#444" strokeWidth="2" /><circle cx="15.500" cy="3.500" r="2.500" stroke="#444" strokeWidth="1.500" /><circle cx="15.500" cy="12.500" r="2.500" stroke="#444" strokeWidth="1.500" /></Svg>],
  ["貼り付け", <Svg w={16} h={16}><path d="M0 2h3l1-2h3l1 2h3v11H0z" fill="#85878e" /><path d="M6 6h9v6l-3 3H6z" fill="#dfe1e6" stroke="#85878e" /></Svg>],
  ["挿入", <Svg w={19} h={16}><path d="M0 7.500h6M4 5l2.500 2.500L4 10" stroke="#444" strokeWidth="1.500" /><path d="M8.500 1.500h10M8.500 3.500h10" stroke="#444" strokeDasharray="1 1" /><path d="M8.500 6.500h10v2h-10zM8.500 11.500h10v2h-10z" fill="#fff" stroke="#444" /></Svg>],
  ["上へ移動", <Svg w={15} h={15}><path d="M7.500 0L15 8h-4v7H4V8H0z" fill="#3e4046" /></Svg>],
  ["下へ移動", <Svg w={15} h={15}><path d="M7.500 15L15 7h-4V0H4v7H0z" fill="#3e4046" /></Svg>],
];

const ROWS = [
  ["表示", ["MS_Content"]],
  ["ステートを変更", ["MS_Content", "から", "Normal"]],
  ["割り当て", ["_button01", "使用", "1"]],
  ...Array.from({ length: 11 }, () => null),
];

function SquareButton({ label, children, className = "" }) {
  return (
    <button aria-label={label} className={`flex size-[30px] items-center justify-center rounded-sm border border-[#a6a5c0] bg-linear-to-b from-white to-[#f0f0f5] ${className}`}>
      {children}
    </button>
  );
}

function Dialog() {
  const label = "text-right leading-[25px] whitespace-nowrap";
  return (
    <div role="dialog" aria-label="高度なアクション" className="w-[870px] border border-[#5a5b60] bg-[#f0f1f7] text-[#17383f] shadow-[4px_4px_24px_rgba(0,0,0,0.4)]">
      <h1 className="h-[38px] bg-white pl-[9px] text-[14px] leading-[36px] text-black">高度なアクション</h1>
      <div className="pr-[14px] pl-[18px]">
        <div className="flex items-start justify-between border-b-2 border-[#d3d4d8] pt-3 pr-[5px] pb-[22px]">
          <div className="grid grid-cols-[102px_187px] gap-x-[3px] gap-y-[7px] text-[14px]">
            <label htmlFor="次から作成" className={label}>次から作成:</label>
            <DialogSelect label="次から作成" value="空欄" text="text-[14px]" />
            <label htmlFor="action-name" className={label}>アクション名:</label>
            <input id="action-name" defaultValue="Button01" className="h-[26px] border border-[#b3b4ba] bg-white pl-[2px] text-[13px] text-[#1d3d4a]" />
          </div>
          <div className="flex flex-col items-end">
            <div className="mr-[6px] flex gap-[6px]">
              <button aria-label="実行" className="mr-[2px] flex size-5 items-center justify-center rounded-full border border-[#b3b4b8] bg-linear-to-b from-white to-[#ddd]">
                <Svg w={9} h={11}><path d="M0 0l9 5.500L0 11z" fill="#444" /></Svg>
              </button>
              {TOP_BUTTONS.map(([n, icon, off]) => (
                <button key={n} aria-label={n} disabled={off} className="flex h-5 w-6 items-center justify-center border border-[#5b5c60] bg-[#ececee] disabled:border-[#b9babd]">{icon}</button>
              ))}
            </div>
            <div className="mt-2 flex gap-1 text-[13px]">
              <label htmlFor="既存のアクション" className={label}>既存のアクション:</label>
              <DialogSelect label="既存のアクション" value="Button01" className="w-[250px]" />
            </div>
          </div>
        </div>
        <div className="mt-[7px] flex items-center gap-[6px]">
          <SquareButton label="タブを追加"><Svg w={12} h={12}><path d="M6 0v12M0 6h12" stroke="#333" strokeWidth="2" /></Svg></SquareButton>
          <SquareButton label="タブを削除">{trash("#333")}</SquareButton>
          <SquareButton label="タブを複製">
            <Svg w={14} h={16}><path d="M5 1h5l3 4v7H5z" fill="#fff" stroke="#444" strokeWidth="1.400" /><path d="M9 1v5h4z" fill="#222" /><path d="M4 4L1 6v7l2 2h6v-3" stroke="#444" strokeWidth="1.400" /></Svg>
          </SquareButton>
          <SquareButton label="左のタブ" className="ml-[297px]">{tabFolder("#a9aaae", true)}</SquareButton>
          <SquareButton label="右のタブ">{tabFolder("#222", false)}</SquareButton>
          <div className="mr-[10px] ml-auto flex gap-[7px]">
            <SquareButton label="最初"><Svg w={12} h={13}><path d="M1 0v13" stroke="#999" strokeWidth="2" /><path d="M11 1v11L4.500 6.500z" fill="#ddd" stroke="#999" strokeWidth="1.500" /></Svg></SquareButton>
            <SquareButton label="前"><Svg w={9} h={13}><path d="M7.500 1v11L1 6.500z" fill="#ddd" stroke="#999" strokeWidth="1.500" /></Svg></SquareButton>
            <SquareButton label="次"><Svg w={9} h={13}><path d="M1 1v11l6.500-5.500z" fill="#ddd" stroke="#999" strokeWidth="1.500" /></Svg></SquareButton>
            <SquareButton label="最後"><Svg w={12} h={13}><path d="M11 0v13" stroke="#999" strokeWidth="2" /><path d="M1 1v11l6.500-5.500z" fill="#ddd" stroke="#999" strokeWidth="1.500" /></Svg></SquareButton>
          </div>
        </div>
        <div className="mt-[14px] flex h-[24px] text-[13px] text-[#222]" role="tablist">
          <button role="tab" aria-selected="true" className={`w-[115px] font-bold text-[#1414e6] ${BTN}`}>Click</button>
          <button role="tab" className={`w-[115px] ${BTN}`}>Completion</button>
          <button role="tab" className={`w-[115px] ${BTN}`}>Untitled-3</button>
          <button aria-label="タブ一覧" className={`ml-auto flex w-[31px] items-center py-[3px] pl-[3px] ${BTN}`}>
            <span className="h-full w-px bg-[#aaa]" />
            <Svg w={9} h={7} className="ml-2"><path d="M0 0h9L4.500 7z" fill="#111" /></Svg>
          </button>
        </div>
        <div className="border border-t-0 border-[#b4b6c2] shadow-[inset_0_1px_0_#d0d1d5]">
          <label className="flex h-[39px] items-center gap-[7px] border-b border-[#b4b6c8] pt-[5px] pl-[11px] text-[13px]">
            <input type="checkbox" className="size-[18px] appearance-none border-2 border-[#b9babd] bg-linear-to-br from-[#e3e3e5] to-white" />
            コンディショナルタブ
          </label>
          <div className="mt-[5px] flex h-6 items-center justify-between bg-[#c9cedb] pr-[7px] pl-[2px] text-[14px]">
            アクション
            <div className="flex w-[270px] items-center justify-between">
              {ROW_ICONS.map(([n, icon]) => <button key={n} aria-label={n}>{icon}</button>)}
            </div>
          </div>
          <div className="flex">
            <table className="flex-1 table-fixed border-collapse bg-[#e5e8f0] text-[14px] leading-4">
              <colgroup><col className="w-[42px]" /><col className="w-[232px]" /><col /></colgroup>
              <tbody>
                {ROWS.map((r, i) => (
                  <tr key={i} className={`h-[31px] border-b border-[#b9bac2] last:border-b-0 ${i === 2 ? "bg-white" : ""}`}>
                    <td className="border-r border-[#b9bac2] pl-[15px]">
                      {r && <Svg w={16} h={13}><path d="M1.500 7l3.500 4 9-9" stroke="#3da91c" strokeWidth="4" /><path d="M2 6.500l3 3 8.500-8.500" stroke="#7fd35a" strokeWidth="1.200" /></Svg>}
                    </td>
                    <td className="border-r border-[#b9bac2] pl-[9px]">{r && r[0]}</td>
                    <td className="pl-[9px]">
                      {r && <span className="flex gap-[14px] text-[13px] text-[#1d3d4a]">{r[1].map((s) => <span key={s}>{s}</span>)}</span>}
                    </td>
                  </tr>
                ))}
              </tbody>
            </table>
            <div className="flex w-[20px] flex-col justify-between bg-[#bcbcbd]">
              <button aria-label="上へ" className="flex h-[18px] items-center justify-center border border-[#ccc] bg-[#fcfcfc]"><Svg w={8} h={5}><path d="M0 5h8L4 0z" fill="#888" /></Svg></button>
              <button aria-label="下へ" className="flex h-[20px] items-center justify-center border border-[#ccc] bg-[#fcfcfc]"><Svg w={8} h={5}><path d="M0 0h8L4 5z" fill="#888" /></Svg></button>
            </div>
          </div>
        </div>
        <div className="mt-[23px] flex justify-end gap-[6px] pr-[5px] text-[14px]">
          <button className={`h-[25px] w-[93px] leading-5 ${BTN}`}>使用状況</button>
          <button className={`h-[25px] w-[125px] leading-5 ${BTN}`}>変数...</button>
        </div>
        <div className="mt-[17px] mb-[19px] flex h-[25px] items-center gap-[6px] pr-[5px] text-[14px]">
          <a href="#help" className="mr-auto mb-[5px] ml-1 text-[#2f6fd8]">ヘルプ...</a>
          <button className={`h-[25px] w-[192px] leading-5 ${BTN}`}>共有アクションとして保存...</button>
          <button disabled className="mr-5 h-[25px] w-[128px] border border-b-2 border-[#c4c5ca] bg-[#f4f5f8] leading-5 text-[#b2b5ba]">アクションの更新</button>
          <button className={`h-[25px] w-[125px] leading-5 ${BTN}`}>閉じる</button>
        </div>
      </div>
    </div>
  );
}

/* ---------- Windows taskbar ---------- */

const edge = (
  <Svg w={32} h={32}>
    <circle cx="17" cy="16" r="15" fill="#1b84cf" />
    <path d="M2 15C3 4 14-1 23 2c7 2 11 9 8 14-2 4-8 4-10 2 2-4-1-8-6-7C9 11 4 14 2 15z" fill="#4fd07c" />
    <path d="M2 15C3 5 12 0 20 1c-2 4-4 7-6 10-5 0-9 2-12 4z" fill="#25b7e4" />
    <path d="M13 13c-3 8 4 14 15 13-4 5-11 6-16 4-6-4-5-13 1-17z" fill="#17569b" />
    <path d="M15 15c2-2 5-1 5 2 0 2-1 3 1 4 3 2 7 1 10-1-2 5-11 6-14 2-2-2-3-5-2-7z" fill="#e9f3e3" />
    <circle cx="8.500" cy="24" r="7.500" fill="#b9bcbe" />
    <circle cx="8.500" cy="21.500" r="2.700" fill="#6d7073" />
    <path d="M4 29c0-5 9-5 9 0z" fill="#6d7073" />
  </Svg>
);

const TASKS = [
  ["エクスプローラー", <Svg w={28} h={24}><path d="M0 2h12v6H0z" fill="#d89a14" /><path d="M0 5h12l3-3h13v20H0z" fill="#fcca57" /><path d="M5 23V15c0-2 1-3 3-3h12c2 0 3 1 3 3v8h-5v-6h-8v6z" fill="#3e93ce" /></Svg>],
  ["Zoom", <span className="flex size-[30px] items-center justify-center rounded-[12px] bg-[#0b5cff] text-[9px] font-bold text-white">zoom</span>],
  ["Edge", edge],
  ["メモ帳", <Svg w={30} h={28}><path d="M7 1l19 1-6 23L1 20z" fill="#8ec9d6" /><path d="M7 1l19 1-1 4L5 5z" fill="#dfe9ea" /><path d="M26 2l2 22-7 3-1-2z" fill="#8b6b3c" /><path d="M5 5l20 1-3 9L2 14z" fill="#b4e0e8" /></Svg>],
  ["Chrome", <Svg w={30} h={30}><circle cx="15" cy="15" r="15" fill="#fbc016" /><path d="M15 15L2 7.500a15 15 0 0 1 26 0z" fill="#e33b2e" /><path d="M15 15L2 7.500A15 15 0 0 0 15 30l6.500-11z" fill="#2da14c" /><path d="M15 8h13.300A15 15 0 0 0 2 7.500L9 18z" fill="#e33b2e" /><circle cx="15" cy="15" r="7" fill="#fff" /><circle cx="15" cy="15" r="5.500" fill="#3f7ff0" /></Svg>],
  ["Edge プロファイル", edge],
  ["トーチ", <Svg w={28} h={30}><circle cx="15" cy="17" r="12" fill="#0a10b8" /><path d="M16 12c-1-6 1-9 4-9l1 2 4-4c3 6 3 12-4 15z" fill="#ee2a1c" /><path d="M18 13c0-4 2-5 4-7 1 4 0 7-2 8z" fill="#fbe23c" /><path d="M13 11l7 6-4 2L5 28l-4 1 1-4 10-9z" fill="#c7c8c6" stroke="#111" /></Svg>],
];

function Taskbar() {
  return (
    <footer className="flex h-[50px] shrink-0 items-center bg-[linear-gradient(90deg,#d3e7c6_52%,#d8e6c4_56%,#e8dfc8_59%,#ecdcdb_61%,#dfe2ee_65%,#d9e4ee_83%,#dde0ee_92%,#d5e8c8_98%)] pr-[5px] font-['Noto_Sans','Noto_Sans_CJK_JP',sans-serif] text-black">
      <button aria-label="スタート" className="flex w-[60px] justify-center">
        <Svg w={20} h={20}><path d="M0 3l8-1.200V9.500H0zM9 1.600L20 0v9.500H9zM0 10.500h8v7.700L0 17zM9 10.500h11V20L9 18.400z" fill="#050505" /></Svg>
      </button>
      <label className="flex h-full w-[360px] shrink-0 items-center border border-[#c9cbc8] bg-white pl-[14px]">
        <Svg w={21} h={20}><circle cx="13.500" cy="7.500" r="6.500" stroke="#222" strokeWidth="1.600" /><path d="M9 12.500L1 19" stroke="#222" strokeWidth="1.600" /></Svg>
        <input aria-label="検索" placeholder="ここに入力して検索" className="ml-[15px] w-[214px] text-[17px] placeholder-[#333]" />
        <span className="flex h-10 w-[90px] items-center justify-center rounded-lg bg-[#efefee]">
          <Svg w={38} h={32}>
            <path d="M13 6V4c0-2 1-3 3-3h6c2 0 3 1 3 3v2" stroke="#3a3a3c" strokeWidth="3" />
            <rect y="5" width="38" height="26" rx="2" fill="#e68a0a" />
            <path d="M0 20h38v9c0 1-1 2-2 2H2c-1 0-2-1-2-2z" fill="#b86104" />
            <path d="M0 18h38v4H0z" fill="#a85a06" />
            <rect x="15" y="16" width="7" height="7" fill="#fbd51c" />
          </Svg>
        </span>
      </label>
      <button aria-label="タスクビュー" className="ml-5">
        <Svg w={21} h={20}><path d="M1 0v4h13V0M1 20v-4h13v4" stroke="#111" strokeWidth="1.400" /><path d="M1 6.500h13v7H1z" stroke="#111" strokeWidth="1.400" /><path d="M18.500 0v5M18.500 9v11" stroke="#111" strokeWidth="1.400" /><path d="M17 6h3v3h-3z" fill="#111" /></Svg>
      </button>
      <div className="ml-[22px] flex h-full">
        {TASKS.map(([n, icon]) => (
          <button key={n} aria-label={n} className="flex w-[62px] items-center justify-center">{icon}</button>
        ))}
        <button aria-label="Captivate Classic" className="flex w-[62px] items-center justify-center border-b-[3px] border-[#2f7d9c] bg-[#edf4e7]">
          <span className="flex h-[27px] w-7 items-center justify-center rounded bg-[#03302e] text-[13px] font-bold text-white">CpC</span>
        </button>
        <button aria-label="Captivate" className="flex w-[62px] items-center justify-center">
          <span className="flex h-[27px] w-7 items-center justify-center rounded bg-[#03302e] text-[16px] font-bold text-[#1fe0b4]">Cp</span>
        </button>
      </div>
      <div className="ml-auto flex items-center">
        <Svg w={17} h={9}><path d="M1 8l7.500-7L16 8" stroke="#111" strokeWidth="1.600" /></Svg>
        <Svg w={15} h={17} className="ml-4"><rect x="1" y="3.500" width="9" height="10" rx="2" stroke="#111" strokeWidth="1.500" /><path d="M10 7l4-2v7l-4-2M2 1h8M2 16h8" stroke="#111" strokeWidth="1.300" /></Svg>
        <Svg w={21} h={14} className="ml-[11px]"><path d="M4 4h14v9H4zM19 6h2v5h-2z" fill="#111" /><path d="M1 0v3M4 0v3M0 3h5v3H2v4" stroke="#111" strokeWidth="1.400" /></Svg>
        <Svg w={20} h={17} className="ml-[9px]"><path d="M6 2h13v10H3V7M8 16h7M11 12v4" stroke="#111" strokeWidth="1.400" /><path d="M1 1h4v4H1zM3 5v3" stroke="#111" strokeWidth="1.400" /></Svg>
        <Svg w={21} h={16} className="ml-[10px]"><path d="M1 5.500h3l4-4v13l-4-4H1z" stroke="#111" strokeWidth="1.300" /><path d="M11 5.500c1 1.500 1 3.500 0 5" stroke="#111" strokeWidth="1.500" /><path d="M14 3.500c2.500 3 2.500 6 0 9M17 1c4 4 4 10 0 14" stroke="#999" strokeWidth="1.300" /></Svg>
        <span className="ml-[11px] w-4 text-[23px] leading-6">A</span>
        <div className="mr-[15px] ml-[12px] w-[77px] text-center text-[14px] leading-[23px]"><p>13:20</p><p>2024/02/14</p></div>
        <button aria-label="通知" className="mr-[26px] ml-2"><Svg w={20} h={20}><path d="M1 1h18v14h-6l-3 3-3-3H1z" stroke="#111" strokeWidth="1.500" /></Svg></button>
      </div>
    </footer>
  );
}

export default function App() {
  return (
    <div className="relative flex h-screen flex-col overflow-hidden bg-[#25262f] font-['Noto_Sans_CJK_JP',sans-serif] [font-feature-settings:'palt']">
      <TitleBar />
      <div className="mx-[6px] flex min-h-0 flex-1 flex-col">
        <Toolbar />
        <div className="flex min-h-0 flex-1">
          <Filmstrip />
          <main className="flex min-w-0 flex-1 flex-col">
            <Stage />
            <Timeline />
          </main>
          <Properties />
        </div>
      </div>
      <div className="flex h-8 shrink-0 items-center border-y border-[#66676b] pr-[88px] pb-1 pl-3 text-[12px] text-[#dcdde2]">
        <span>C:\Users\mplus\Documents\My Adobe Captivate Projects\For Miho.cptx</span>
        <span className="ml-auto h-[25px] w-[3px] bg-[#dcdde2]" />
        <span className="mx-[14px] w-[134px] whitespace-nowrap">フィルムストリップビュー</span>
        <span className="mr-[6px] h-[25px] w-[3px] bg-[#dcdde2]" />
        <span className="text-[14px]">1024 x 627</span>
      </div>
      <Taskbar />
      <div className="pointer-events-none absolute inset-0 flex items-start justify-center pt-[100px] font-['Noto_Sans','Noto_Sans_CJK_JP',sans-serif]">
        <div className="pointer-events-auto"><Dialog /></div>
      </div>
    </div>
  );
}
